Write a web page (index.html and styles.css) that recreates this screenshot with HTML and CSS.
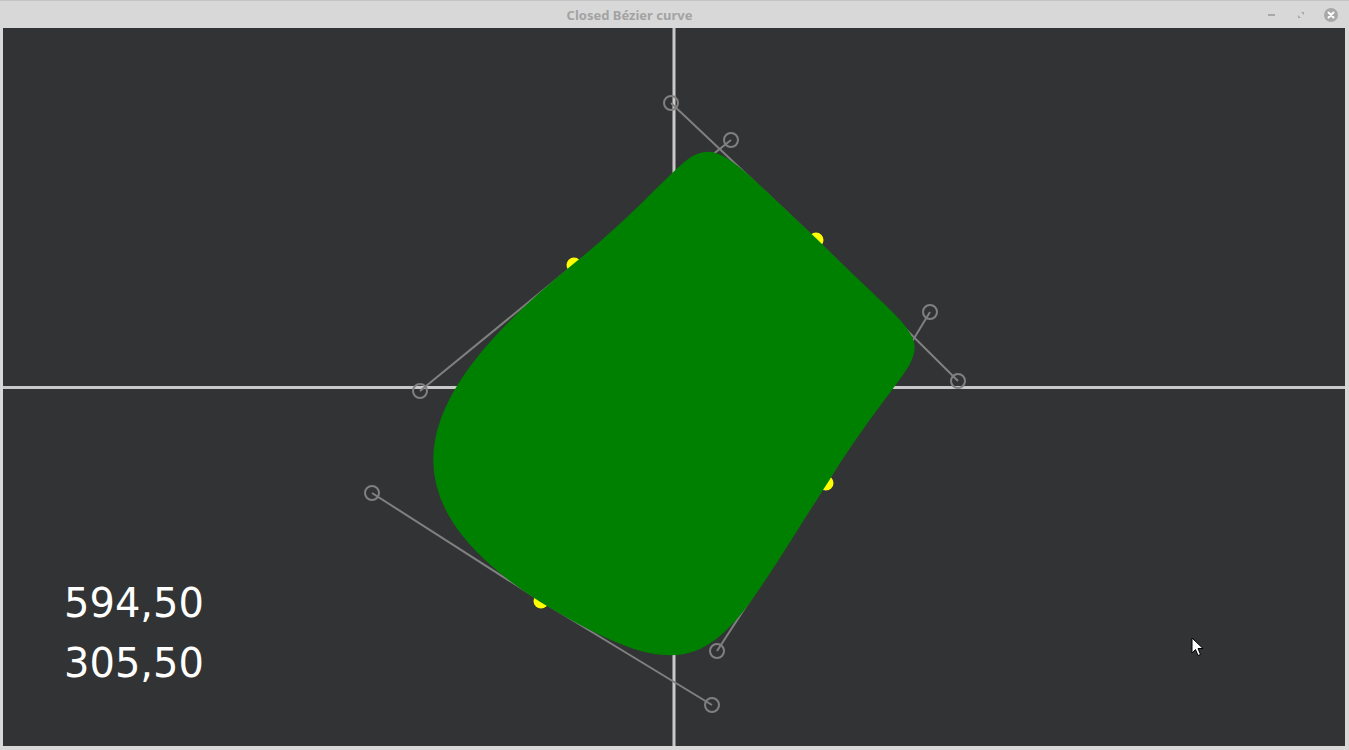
FILE: index.html
```html
<!DOCTYPE html>
<html>
<head>
<meta charset="utf-8">
<title>Closed Bézier curve</title>
<link rel="stylesheet" href="styles.css">
</head>
<body>
<div class="window">
  <div class="titlebar">
    <div class="title">Closed Bézier curve</div>
    <div class="controls">
      <span class="btn btn-min"><span class="dash"></span></span>
      <span class="btn btn-restore">
        <svg width="14" height="14" viewBox="0 0 14 14"><path d="M7 4 L10 4 L10 7 Z M4 7 L4 10 L7 10 Z" fill="#a8a8a8"/></svg>
      </span>
      <span class="btn btn-close">
        <svg width="14" height="14" viewBox="0 0 14 14"><circle cx="7" cy="7" r="7" fill="#a8a8a8"/><path d="M4.5 4.5 L9.5 9.5 M9.5 4.5 L4.5 9.5" stroke="#fff" stroke-width="2" stroke-linecap="round"/></svg>
      </span>
    </div>
  </div>
  <div class="frame">
    <svg class="canvas" width="1342" height="718" viewBox="3 28 1342 718">
      <line class="axis" x1="674" y1="28" x2="674" y2="746"/>
      <line class="axis" x1="3" y1="387.5" x2="1345" y2="387.5"/>
      <g class="handles">
        <polyline points="420,391 574,265 731,140"/>
        <polyline points="671,103 816,240 958,381"/>
        <polyline points="930,312 826,483 717,651"/>
        <polyline points="712,705 541,601 372,493"/>
        <circle cx="420" cy="391" r="7"/>
        <circle cx="731" cy="140" r="7"/>
        <circle cx="671" cy="103" r="7"/>
        <circle cx="958" cy="381" r="7"/>
        <circle cx="930" cy="312" r="7"/>
        <circle cx="717" cy="651" r="7"/>
        <circle cx="712" cy="705" r="7"/>
        <circle cx="372" cy="493" r="7"/>
      </g>
      <g class="anchors">
        <circle cx="574" cy="265" r="7.5"/>
        <circle cx="816" cy="240" r="7.5"/>
        <circle cx="826" cy="483" r="7.5"/>
        <circle cx="541" cy="601" r="7.5"/>
      </g>
      <path class="shape" d="M574 265 C731 140 671 103 816 240 C958 381 930 312 826 483 C717 651 712 705 541 601 C372 493 420 391 574 265 Z"/>
      <text class="coords" x="64" y="617">594,50</text>
      <text class="coords" x="64" y="677">305,50</text>
    </svg>
  </div>
  <svg class="cursor" width="14" height="22" viewBox="0 0 14 22">
    <path d="M1 1 L1 16 L4.5 12.5 L7 18.5 L9.5 17.5 L7 11.5 L12 11.5 Z" fill="#fff" stroke="#000" stroke-width="1" stroke-linejoin="miter"/>
  </svg>
</div>
</body>
</html>
```

FILE: styles.css
```css
html, body {
  margin: 0;
  padding: 0;
  background: #d8d8d8;
}
.window {
  position: relative;
  width: 1349px;
  height: 750px;
  display: flex;
  flex-direction: column;
  background: #d8d8d8;
  overflow: hidden;
}
.titlebar {
  height: 28px;
  display: flex;
  align-items: center;
  border-top: 1px solid #c4c4c4;
  box-sizing: border-box;
}
.title {
  flex: 1;
  text-align: center;
  font-family: "Noto Sans", "DejaVu Sans", sans-serif;
  font-weight: bold;
  font-size: 13px;
  color: #a3a3a3;
  padding-top: 1px;
}
.controls {
  width: 90px;
  box-sizing: border-box;
  padding: 0 11px 0 5px;
  display: flex;
  gap: 16px;
  align-items: center;
}
.btn {
  width: 14px;
  height: 14px;
  display: flex;
  align-items: center;
  justify-content: center;
}
.btn svg { display: block; }
.dash {
  width: 7px;
  height: 2px;
  background: #a8a8a8;
}
.frame {
  flex: 1;
  padding: 0 4px 4px 3px;
  display: flex;
}
.canvas {
  display: block;
  background: #323335;
}
.axis {
  stroke: #c9c9c9;
  stroke-width: 3;
}
.handles polyline {
  fill: none;
  stroke: #808080;
  stroke-width: 2;
}
.handles circle {
  fill: none;
  stroke: #808080;
  stroke-width: 2;
}
.anchors circle {
  fill: #ffff00;
}
.shape {
  fill: #008000;
  stroke: #008000;
  stroke-width: 2.5;
}
.coords {
  font-family: "DejaVu Sans", sans-serif;
  font-size: 40px;
  fill: #ffffff;
}
.cursor {
  position: absolute;
  left: 1191px;
  top: 637px;
}
```
